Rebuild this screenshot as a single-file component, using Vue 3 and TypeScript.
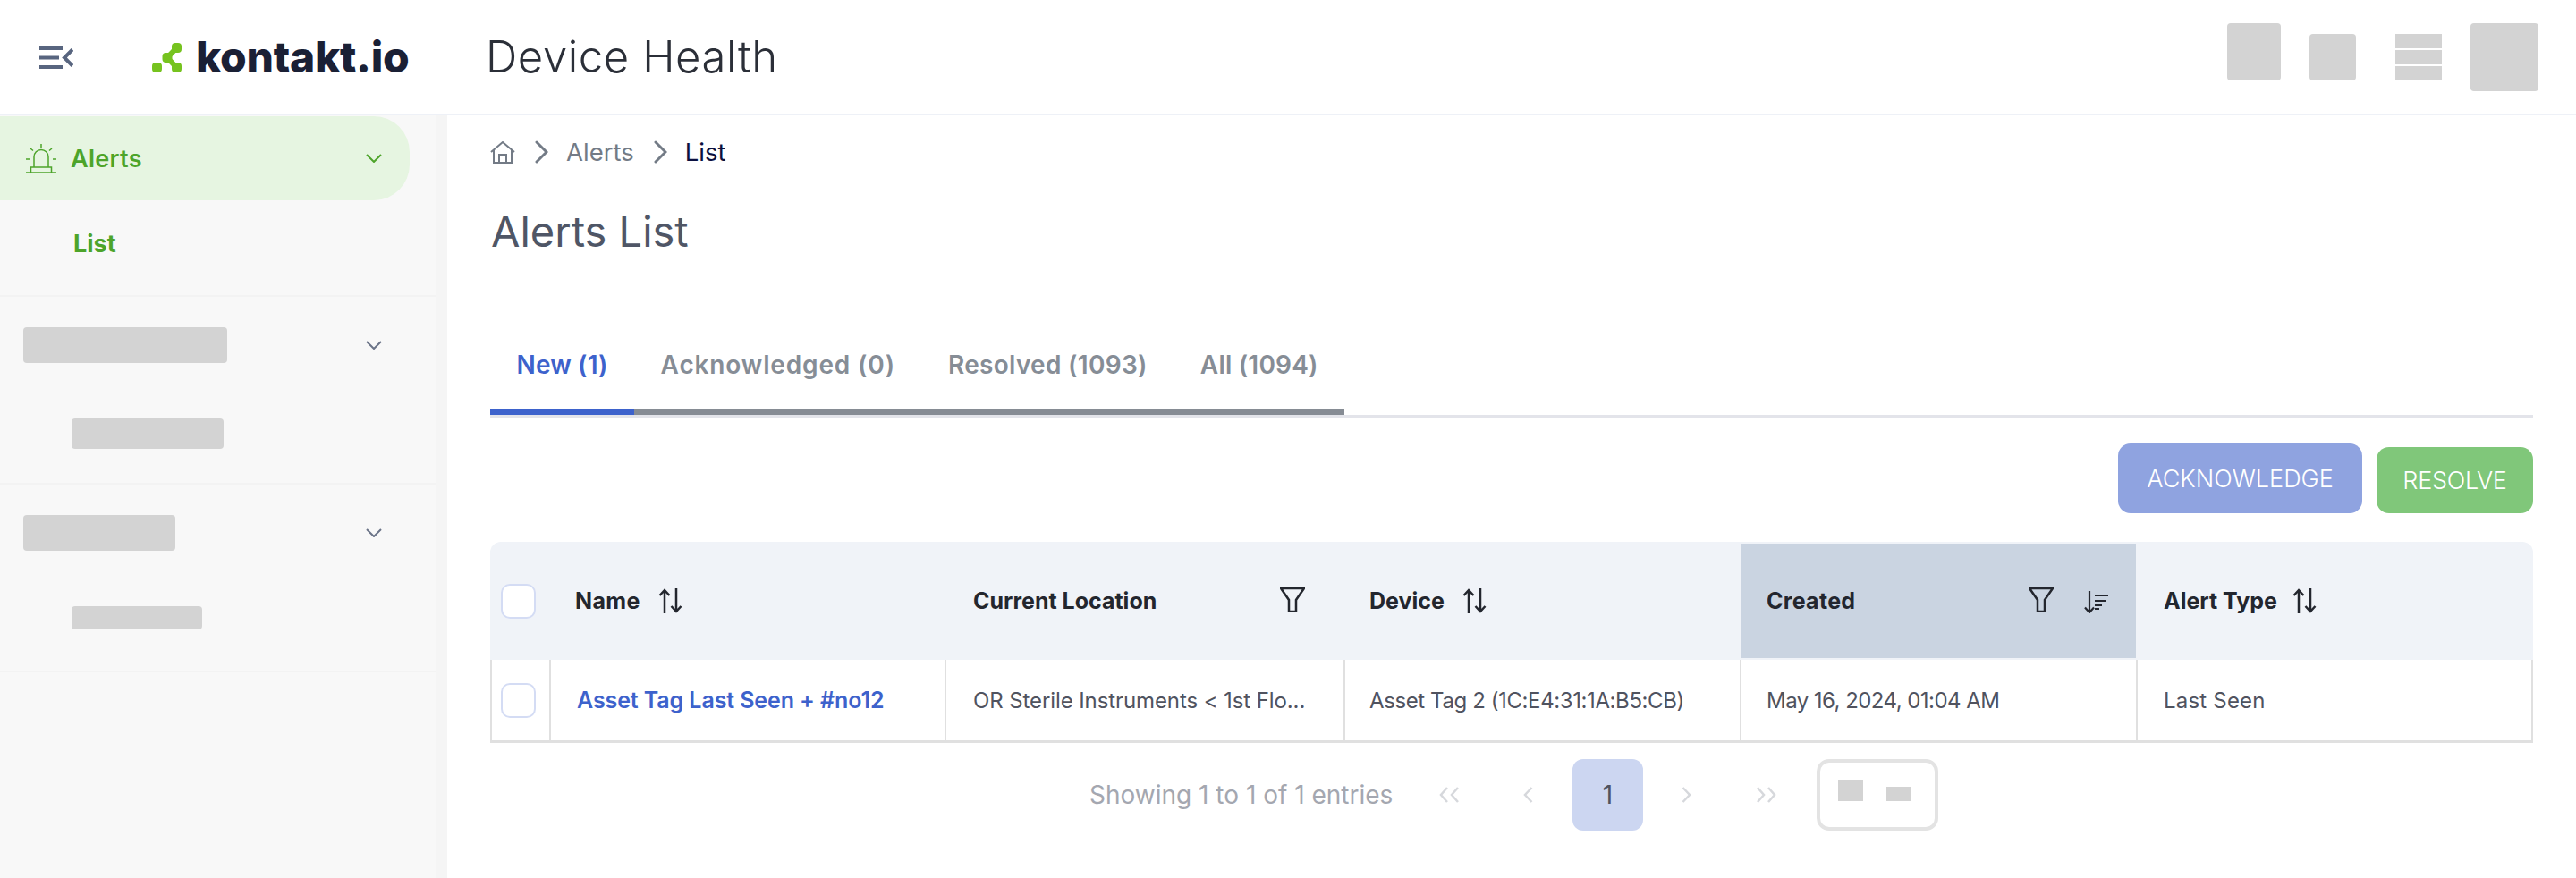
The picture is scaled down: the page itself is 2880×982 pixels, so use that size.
<script setup lang="ts">
const tabs = [
  { label: 'New (1)', active: true, spacing: '0.15px' },
  { label: 'Acknowledged (0)', active: false, spacing: '0.85px' },
  { label: 'Resolved (1093)', active: false, spacing: '0.3px' },
  { label: 'All (1094)', active: false, spacing: '0.2px' },
]
</script>

<template>
  <div class="page">
    <header class="topbar">
      <svg class="burger" viewBox="0 0 38 25" width="38" height="25">
        <path d="M0 2h26M0 12.500h22M0 23h26" stroke="#58657f" stroke-width="4" fill="none" />
        <path d="M37 3.500 28 12.500l9 9" stroke="#58657f" stroke-width="4" fill="none" />
      </svg>
      <div class="logo">
        <svg viewBox="0 0 33 33" width="33" height="33" class="logo-mark">
          <path d="M27 6 17 16.500 27 27" stroke="#76c31f" stroke-width="6" fill="none" />
          <rect x="22" y="0" width="11" height="11" rx="4" fill="#76c31f" />
          <rect x="11.500" y="11" width="11" height="11" rx="4" fill="#76c31f" />
          <rect x="22" y="22" width="11" height="11" rx="4" fill="#76c31f" />
          <rect x="0" y="22" width="11" height="11" rx="4" fill="#76c31f" />
        </svg>
        <span class="logo-text">kontakt.io</span>
      </div>
      <h1 class="app-title">Device Health</h1>
      <div class="top-actions">
        <div class="ph ph-a"></div>
        <div class="ph ph-b"></div>
        <div class="ph-stack"><i></i><i></i><i></i></div>
        <div class="ph ph-c"></div>
      </div>
    </header>

    <div class="body">
      <aside class="sidebar">
        <div class="side-inner">
          <section class="side-group first">
            <div class="pill">
              <svg class="alarm" viewBox="0 0 34 33" width="34" height="33" fill="none" stroke="#4da42a" stroke-width="1.500">
                <path d="M0 32h34M5.500 32v-6h23v6M9 26V14.500a8 8 0 0 1 16 0V26" />
                <path d="M17 0v4M5 5l3 2.500M29 5l-3 2.500M0 17h4M30 17h4" />
              </svg>
              <span class="pill-label">Alerts</span>
              <svg class="chev" viewBox="0 0 18 10" width="18" height="10" fill="none" stroke="#4da42a" stroke-width="2"><path d="M1 1l8 8 8-8" /></svg>
            </div>
            <div class="sub-active">List</div>
          </section>
          <section class="side-group g2">
            <div class="group-head">
              <div class="ph wide"></div>
              <svg class="chev" viewBox="0 0 18 10" width="18" height="10" fill="none" stroke="#6b7488" stroke-width="2"><path d="M1 1l8 8 8-8" /></svg>
            </div>
            <div class="ph sub1"></div>
          </section>
          <section class="side-group g3">
            <div class="group-head">
              <div class="ph narrow"></div>
              <svg class="chev" viewBox="0 0 18 10" width="18" height="10" fill="none" stroke="#6b7488" stroke-width="2"><path d="M1 1l8 8 8-8" /></svg>
            </div>
            <div class="ph sub2"></div>
          </section>
        </div>
      </aside>

      <main class="content">
        <nav class="crumbs">
          <svg viewBox="0 0 28 25" width="28" height="25" fill="none" stroke="#737b86" stroke-width="2">
            <path d="M1 12 14 1l13 11M4 10v14h20V10M10 24v-9h8v9" />
          </svg>
          <svg class="crumb-sep" viewBox="0 0 15 26" width="15" height="26" fill="none" stroke="#737b86" stroke-width="3" stroke-linecap="round"><path d="M2 2l11 11L2 24" /></svg>
          <span class="crumb-a">Alerts</span>
          <svg class="crumb-sep" viewBox="0 0 15 26" width="15" height="26" fill="none" stroke="#737b86" stroke-width="3" stroke-linecap="round"><path d="M2 2l11 11L2 24" /></svg>
          <span class="crumb-b">List</span>
        </nav>
        <h2 class="page-title">Alerts List</h2>

        <div class="tabs">
          <div
            v-for="t in tabs"
            :key="t.label"
            class="tab"
            :class="{ on: t.active }"
            :style="{ letterSpacing: t.spacing }"
          >{{ t.label }}</div>
        </div>

        <div class="btn-row">
          <button class="btn ack">ACKNOWLEDGE</button>
          <button class="btn res">RESOLVE</button>
        </div>

        <div class="table">
          <div class="row head">
            <div class="c c0"><span class="check"></span></div>
            <div class="c c1"><b class="name-h">Name</b>
              <svg class="sort" viewBox="0 0 27 28" width="27" height="28" fill="none" stroke="#23262e" stroke-width="2.500"><path d="M7 28V2M1.500 8 7 2l5.500 6M20 0v26M14.500 20l5.500 6 5.500-6" /></svg>
            </div>
            <div class="c c2 spread"><b>Current Location</b>
              <svg class="filter" viewBox="0 0 28 28" width="28" height="28" fill="none" stroke="#23262e" stroke-width="2.500"><path d="M1 1h26L18 14v13h-8V14z" /></svg>
            </div>
            <div class="c c3"><b>Device</b>
              <svg class="sort" viewBox="0 0 27 28" width="27" height="28" fill="none" stroke="#23262e" stroke-width="2.500"><path d="M7 28V2M1.500 8 7 2l5.500 6M20 0v26M14.500 20l5.500 6 5.500-6" /></svg>
            </div>
            <div class="c c4 sorted"><b class="created-h">Created</b>
              <span class="grow"></span>
              <svg class="filter" viewBox="0 0 28 28" width="28" height="28" fill="none" stroke="#23262e" stroke-width="2.500"><path d="M1 1h26L18 14v13h-8V14z" /></svg>
              <svg class="sort-desc" viewBox="0 0 29 28" width="29" height="28" fill="none" stroke="#23262e" stroke-width="2.200"><path d="M7 3v24M2 21.500 7 27l5-5.500M13 8h15M13 14h12M13 19h8M13 23h5" /></svg>
            </div>
            <div class="c c5"><b>Alert Type</b>
              <svg class="sort sort-tight" viewBox="0 0 27 28" width="27" height="28" fill="none" stroke="#23262e" stroke-width="2.500"><path d="M7 28V2M1.500 8 7 2l5.500 6M20 0v26M14.500 20l5.500 6 5.500-6" /></svg>
            </div>
          </div>
          <div class="row item">
            <div class="c c0"><span class="check"></span></div>
            <div class="c c1"><span class="link">Asset Tag Last Seen + #no12</span></div>
            <div class="c c2"><span class="cell cell-loc">OR Sterile Instruments &lt; 1st Flo...</span></div>
            <div class="c c3"><span class="cell cell-dev">Asset Tag 2 (1C:E4:31:1A:B5:CB)</span></div>
            <div class="c c4"><span class="cell cell-date">May 16, 2024, 01:04 AM</span></div>
            <div class="c c5"><span class="cell cell-type">Last Seen</span></div>
          </div>
        </div>

        <div class="pager">
          <span class="showing">Showing 1 to 1 of 1 entries</span>
          <svg class="p-first" viewBox="0 0 23 18" width="23" height="18" fill="none" stroke="#d6d8dc" stroke-width="2.500"><path d="M9 1 2 9l7 8M21 1l-7 8 7 8" /></svg>
          <svg class="p-prev" viewBox="0 0 11 18" width="11" height="18" fill="none" stroke="#d6d8dc" stroke-width="2.500"><path d="M9.500 1 2 9l7.500 8" /></svg>
          <div class="page-num">1</div>
          <svg class="p-next" viewBox="0 0 11 18" width="11" height="18" fill="none" stroke="#d6d8dc" stroke-width="2.500"><path d="M1.500 1 9 9l-7.500 8" /></svg>
          <svg class="p-last" viewBox="0 0 23 18" width="23" height="18" fill="none" stroke="#d6d8dc" stroke-width="2.500"><path d="M2 1l7 8-7 8M14 1l7 8-7 8" /></svg>
          <div class="size-box"><i class="s1"></i><i class="s2"></i></div>
        </div>
      </main>
    </div>
  </div>
</template>

<style>
html, body { margin: 0; background: #fff; }
</style>

<style scoped>
.page {
  width: 2880px;
  height: 982px;
  overflow: hidden;
  display: flex;
  flex-direction: column;
  font-family: Inter, "Liberation Sans", sans-serif;
  background: #fff;
}
.topbar {
  height: 127px;
  border-bottom: 2px solid #eef1f7;
  display: flex;
  align-items: center;
  flex: none;
  padding-left: 44px;
  padding-right: 42px;
}
.burger { margin-top: 1px; flex: none; }
.logo { display: flex; align-items: center; margin-left: 88px; width: 373px; flex: none; }
.logo-mark { flex: none; margin-top: 1px; }
.logo-text {
  margin-left: 16px;
  font-size: 48px;
  font-weight: 800;
  color: #1a2035;
  line-height: 1;
  letter-spacing: -0.3px;
}
.app-title {
  margin: 0;
  font-size: 49px;
  font-weight: 300;
  color: #2b2f38;
  line-height: 1;
  letter-spacing: 0.6px;
}
.top-actions { margin-left: auto; display: flex; align-items: flex-start; height: 76px; }
.ph { background: #d3d3d3; border-radius: 4px; }
.ph-a { width: 60px; height: 64px; }
.ph-b { width: 52px; height: 52px; margin: 12px 0 0 32px; }
.ph-stack { display: flex; flex-direction: column; gap: 2px; margin: 12px 0 0 44px; width: 52px; }
.ph-stack i { display: block; height: 16px; background: #d3d3d3; }
.ph-c { width: 76px; height: 76px; margin-left: 32px; }

.body { flex: 1; display: flex; min-height: 0; }
.sidebar { width: 500px; flex: none; background: #f5f5f5; }
.side-inner { width: 488px; height: 100%; background: #f8f8f8; }
.side-group { border-bottom: 2px solid #f3f3f3; box-sizing: border-box; }
.first { height: 203px; padding-top: 1px; }
.g2, .g3 { height: 210px; padding-top: 34px; }
.pill {
  width: 458px;
  height: 94px;
  box-sizing: border-box;
  background: #e6f5e1;
  border-radius: 0 40px 40px 0;
  display: flex;
  align-items: center;
  padding-left: 29px;
}
.alarm { flex: none; margin-top: 1px; }
.pill-label { margin-left: 16px; font-size: 27px; font-weight: 600; letter-spacing: 0.3px; color: #4da42a; }
.pill .chev { margin-left: auto; margin-right: 31px; }
.sub-active { margin: 31px 0 0 82px; font-size: 27px; font-weight: 700; color: #4da42a; line-height: 36px; }
.group-head { display: flex; align-items: center; justify-content: space-between; padding: 0 61px 0 26px; }
.wide { width: 228px; height: 40px; }
.narrow { width: 170px; height: 40px; }
.sub1 { width: 170px; height: 34px; margin: 62px 0 0 80px; }
.sub2 { width: 146px; height: 26px; margin: 62px 0 0 80px; }

.content { flex: 1; padding: 0 48px; min-width: 0; }
.crumbs { display: flex; align-items: center; height: 36px; margin-top: 23px; }
.crumb-sep { margin: 0 20px 0 22px; flex: none; }
.crumb-a { font-size: 27.500px; color: #737b86; }
.crumb-b { font-size: 27.500px; color: #0b1040; }
.page-title { margin: 43px 0 0 1px; font-size: 47px; line-height: 56px; font-weight: 400; color: #4f5666; }
.tabs {
  margin-top: 105px;
  display: flex;
  height: 72px;
  border-bottom: 4px solid #e3e4ea;
}
.tab {
  padding: 0 29.500px 34px 29.500px;
  height: 72px;
  box-sizing: border-box;
  font-size: 28px;
  font-weight: 600;
  color: #868d96;
  border-bottom: 6px solid #868c94;
  display: flex;
  align-items: center;
  white-space: nowrap;
}
.tab.on { color: #3d62cc; border-bottom-color: #3d62cc; }
.btn-row { display: flex; justify-content: flex-end; align-items: flex-end; gap: 16px; margin-top: 28px; height: 78px; }
.btn {
  border: 0;
  border-radius: 14px;
  color: #fff;
  font: 300 27px Inter, "Liberation Sans", sans-serif;
  padding: 0;
}
.ack { width: 273px; height: 78px; background: #8fa3e0; }
.res { width: 175px; height: 74px; background: #80c77a; letter-spacing: -0.3px; }

.table { margin-top: 32px; font-size: 25px; }
.row { display: flex; }
.head { height: 132px; background: #f0f3f8; border-radius: 12px 12px 0 0; }
.head b { font-weight: 700; color: #23262e; font-size: 25px; white-space: nowrap; }
.head .name-h { letter-spacing: 0.4px; }
.head .created-h { letter-spacing: 0.3px; }
.item { height: 93px; box-sizing: border-box; border-bottom: 3px solid #e0e0e0; border-left: 2px solid #e0e0e0; border-right: 2px solid #e0e0e0; }
.c { display: flex; align-items: center; box-sizing: border-box; white-space: nowrap; }
.c0 { width: 67px; padding-left: 12px; }
.c1 { width: 442px; padding-left: 28px; }
.c2 { width: 446px; padding-left: 31px; padding-right: 44px; }
.c3 { width: 443px; padding-left: 28px; }
.c4 { width: 443px; padding-left: 29px; padding-right: 30px; }
.c5 { flex: 1; padding-left: 30px; }
.item .c0 { width: 66px; padding-left: 10px; }
.item .c { border-right: 2px solid #e0e0e0; }
.item .c1 { padding-left: 29px; }
.item .c2 { padding-left: 30px; }
.item .c3 { padding-left: 27px; }
.item .c4 { padding-left: 28px; }
.item .c5 { border-right: 0; padding-left: 29px; }
.spread { justify-content: space-between; }
.sorted { background: #cad4e1; margin: 2px 1px; width: 441px; padding-left: 28px; }
.grow { flex: 1; }
.sort { margin-left: 20px; flex: none; }
.sort-tight { margin-left: 17px; }
.filter { flex: none; margin-top: -2px; }
.sort-desc { flex: none; margin-left: 33px; }
.check {
  width: 39px;
  height: 39px;
  box-sizing: border-box;
  border: 2px solid #d4dcf4;
  border-radius: 10px;
  background: #fff;
  display: block;
}
.link { color: #3d62cc; font-weight: 600; font-size: 25px; letter-spacing: -0.1px; }
.cell { color: #50535f; font-size: 24px; }
.cell-loc { letter-spacing: -0.1px; }
.cell-dev { letter-spacing: -0.4px; }
.cell-date { letter-spacing: -0.55px; }
.cell-type { letter-spacing: 0.2px; }

.pager { display: flex; align-items: center; margin-top: 18px; height: 80px; padding-left: 670px; }
.showing { color: #a4a7b0; font-size: 28px; font-weight: 400; white-space: nowrap; width: 391px; flex: none; }
.p-first { flex: none; }
.p-prev { margin-left: 71px; flex: none; }
.page-num {
  margin-left: 44px;
  width: 79px;
  height: 80px;
  background: #ccd6f1;
  border-radius: 12px;
  display: flex;
  align-items: center;
  justify-content: center;
  font-size: 28px;
  color: #50535f;
  flex: none;
}
.p-next { margin-left: 43px; flex: none; }
.p-last { margin-left: 72px; flex: none; }
.size-box {
  margin-left: 45px;
  width: 136px;
  height: 80px;
  box-sizing: border-box;
  border: 4px solid #e3e3e3;
  border-radius: 14px;
  display: flex;
  align-items: center;
  padding-left: 20px;
  flex: none;
}
.size-box i { display: block; background: #d3d3d3; width: 28px; }
.s1 { height: 24px; margin-top: -10px; }
.s2 { height: 16px; margin-left: 26px; margin-top: -2px; }
</style>
